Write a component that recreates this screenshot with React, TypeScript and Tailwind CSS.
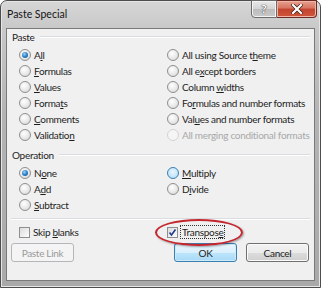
import React from "react";

const font = { fontFamily: 'Lato, "Open Sans", Arial, sans-serif' };

function Label({ text, k, disabled }: { text: string; k: number; disabled?: boolean }) {
  if (k < 0) {
    return <span className={disabled ? "text-[#a8a8a8]" : "text-[#1e1e1e]"}>{text}</span>;
  }
  return (
    <span className={disabled ? "text-[#a8a8a8]" : "text-[#1e1e1e]"}>
      {text.slice(0, k)}
      <u className="underline-offset-[1px]">{text.slice(k, k + 1)}</u>
      {text.slice(k + 1)}
    </span>
  );
}

function Radio({
  text,
  k,
  checked,
  hover,
  disabled,
}: {
  text: string;
  k: number;
  checked?: boolean;
  hover?: boolean;
  disabled?: boolean;
}) {
  const ring = disabled
    ? "border-[#d4d4d4] bg-[#f5f5f5]"
    : hover
    ? "border-[#3c7fb1] bg-[radial-gradient(circle_at_50%_40%,#eaf6fd_0%,#bfe3fa_70%,#a7d9f5_100%)]"
    : "border-[#8f8f8f] bg-[radial-gradient(circle_at_40%_35%,#ffffff_0%,#e8e8e8_55%,#d0d0d0_100%)]";
  return (
    <div className="flex h-[16px] items-center whitespace-nowrap">
      <div className={`flex h-[12px] w-[12px] shrink-0 items-center justify-center rounded-full border ${ring}`}>
        {checked && (
          <div className="h-[6px] w-[6px] rounded-full bg-[radial-gradient(circle_at_40%_35%,#9fd4f7_0%,#2a80c8_50%,#0f4f8c_100%)]" />
        )}
      </div>
      <div className="ml-[3px]">
        <Label text={text} k={k} disabled={disabled} />
      </div>
    </div>
  );
}

function SectionHeader({ title }: { title: string }) {
  return (
    <div className="flex h-[14px] items-center pl-[5px] pr-[4px]">
      <span className="text-[#1e1e1e]">{title}</span>
      <div className="ml-[5px] h-0 flex-1 border-t border-b border-t-[#d9dde2] border-b-white" />
    </div>
  );
}

function Btn({ children, kind }: { children: React.ReactNode; kind: "disabled" | "default" | "normal" }) {
  const cls =
    kind === "disabled"
      ? "border-[#b4b7ba] bg-[#f4f4f4] text-[#9a9a9a]"
      : kind === "default"
      ? "border-[#3c7fb1] bg-[linear-gradient(#eaf6fd_0%,#d9f0fc_50%,#bee6fd_50%,#a7d9f5_100%)] text-[#1e1e1e] shadow-[inset_0_0_0_1px_#cdeaf9]"
      : "border-[#707070] bg-[linear-gradient(#f2f2f2_0%,#ebebeb_50%,#dddddd_50%,#cfcfcf_100%)] text-[#1e1e1e] shadow-[inset_0_0_0_1px_#fbfbfb]";
  return (
    <div className={`flex h-[19px] w-[63px] items-center justify-center rounded-[3px] border ${cls}`}>
      {children}
    </div>
  );
}

export default function App() {
  return (
    <div className="relative h-[289px] w-[325px] bg-white" style={font}>
      <div className="flex h-[288px] w-[321px] flex-col rounded-t-[7px] border border-[#4d4d4d] bg-[linear-gradient(180deg,#d6d6d6_0%,#c8c8c8_10%,#b4b4b4_40%,#a9a9a9_100%)] px-[5px] pb-[6px] shadow-[inset_0_0_0_1px_#e6e6e6]">
        {/* title bar */}
        <div className="flex h-[27px] shrink-0 items-start">
          <div className="mt-[6px] pl-[1px] text-[10.5px] text-[#141414]">Paste Special</div>
          <div className="ml-auto -mt-[1px] mr-[-2px] flex h-[18px]">
            <div className="flex w-[26px] items-center justify-center rounded-bl-[4px] border border-[#6b6b6b] bg-[linear-gradient(#e9e9e9_0%,#d3d3d3_50%,#bcbcbc_51%,#c9c9c9_100%)] shadow-[inset_0_0_0_1px_#f3f3f3]">
              <span className="text-[12px] font-bold leading-none text-white [text-shadow:0_0_1px_#333,0_0_1px_#333]">?</span>
            </div>
            <div className="flex w-[40px] items-center justify-center rounded-br-[4px] border border-l-0 border-[#6e2a22] bg-[linear-gradient(#e8a190_0%,#d7735f_45%,#c3442e_50%,#d0553a_100%)] shadow-[inset_0_0_0_1px_#efb5a8]">
              <svg width="12" height="10" viewBox="0 0 12 10">
                <path d="M2 1 L10 9 M10 1 L2 9" stroke="#3a1a14" strokeWidth="3.6" strokeLinecap="square" />
                <path d="M2 1 L10 9 M10 1 L2 9" stroke="#ffffff" strokeWidth="2.2" strokeLinecap="square" />
              </svg>
            </div>
          </div>
        </div>
        {/* client */}
        <div className="relative flex-1 border border-[#7a7a7a] bg-[#f0f0f0] text-[10px] leading-none tracking-[-0.3px]">
          <div className="pt-[1px]">
            <SectionHeader title="Paste" />
          </div>
          <div className="mt-[3px] flex pl-[12px]">
            <div className="w-[148px] shrink-0">
              <Radio text="All" k={1} checked />
              <Radio text="Formulas" k={0} />
              <Radio text="Values" k={0} />
              <Radio text="Formats" k={5} />
              <Radio text="Comments" k={0} />
              <Radio text="Validation" k={9} />
            </div>
            <div className="shrink-0">
              <Radio text="All using Source theme" k={18} />
              <Radio text="All except borders" k={5} />
              <Radio text="Column widths" k={7} />
              <Radio text="Formulas and number formats" k={2} />
              <Radio text="Values and number formats" k={3} />
              <Radio text="All merging conditional formats" k={-1} disabled />
            </div>
          </div>
          <div className="mt-[5px]">
            <SectionHeader title="Operation" />
          </div>
          <div className="mt-[3px] flex pl-[12px]">
            <div className="w-[148px] shrink-0">
              <Radio text="None" k={1} checked />
              <Radio text="Add" k={1} />
              <Radio text="Subtract" k={0} />
            </div>
            <div className="shrink-0">
              <Radio text="Multiply" k={0} hover />
              <Radio text="Divide" k={1} />
            </div>
          </div>
          <div className="mx-[4px] mt-[5px] h-0 border-t border-b border-t-[#d9dde2] border-b-white" />
          <div className="mt-[4px] flex h-[16px] items-center whitespace-nowrap pl-[12px]">
            <div className="flex w-[148px] shrink-0 items-center">
              <div className="h-[11px] w-[11px] border border-[#8f8f8f] bg-[linear-gradient(135deg,#dcdcdc,#fdfdfd)]" />
              <div className="ml-[3px]">
                <Label text="Skip blanks" k={5} />
              </div>
            </div>
            <div className="flex items-center">
              <div className="flex h-[11px] w-[11px] items-center justify-center border border-[#8f8f8f] bg-[linear-gradient(135deg,#dcdcdc,#fdfdfd)]">
                <svg width="9" height="9" viewBox="0 0 9 9">
                  <path d="M1.5 4.5 L3.5 7 L7.5 1.5" stroke="#233a8c" strokeWidth="1.6" fill="none" />
                </svg>
              </div>
              <div className="ml-[2px] border border-dotted border-[#333] px-[1px] py-[1px]">
                <Label text="Transpose" k={8} />
              </div>
            </div>
          </div>
          <div className="mt-[3px] flex pl-[4px] pr-[5px]">
            <Btn kind="disabled">Paste Link</Btn>
            <div className="ml-auto flex gap-[9px]">
              <Btn kind="default">OK</Btn>
              <Btn kind="normal">Cancel</Btn>
            </div>
          </div>
          {/* red annotation ellipse */}
          <div className="absolute left-[148px] top-[190px] h-[27px] w-[88px] rounded-[50%] border-2 border-[#c4262e] shadow-[1px_1px_2px_rgba(0,0,0,0.35)]" />
        </div>
      </div>
    </div>
  );
}
